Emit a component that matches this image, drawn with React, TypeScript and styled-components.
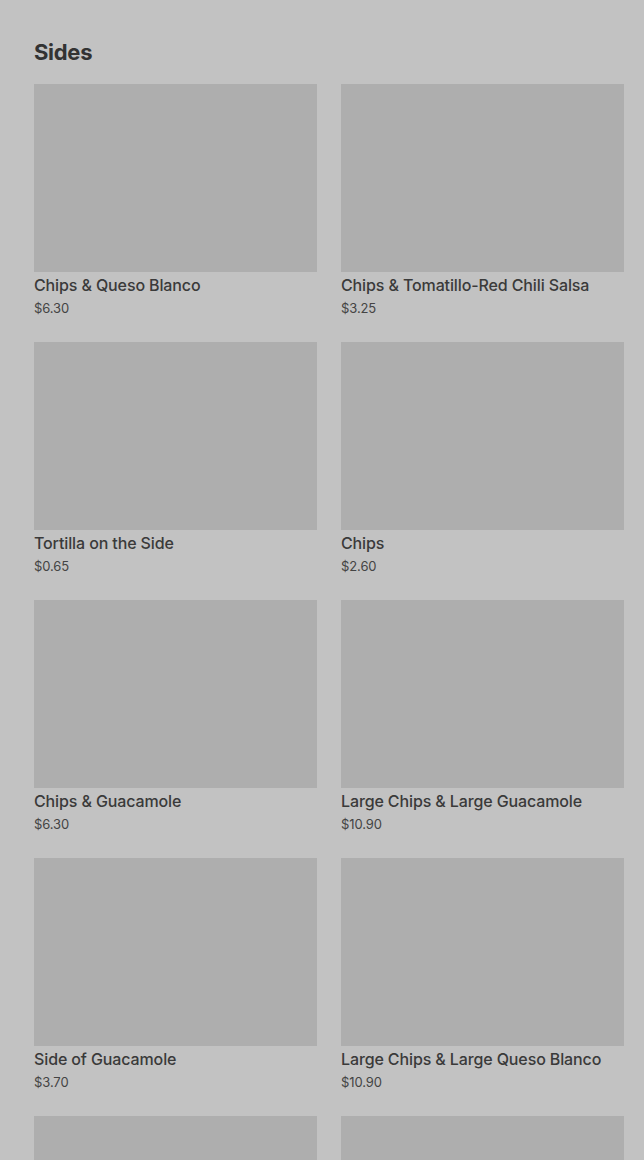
import styled, { createGlobalStyle } from "styled-components";

const GlobalStyle = createGlobalStyle`
  html, body {
    margin: 0;
    padding: 0;
    background: #c2c2c2;
  }
  body {
    font-family: Inter, "Noto Sans", Arial, sans-serif;
    color: #333333;
  }
`;

interface Item {
  name?: string;
  price?: string;
}

// last row is only partly in view, so just the thumbnails
const items: Item[] = [
  { name: "Chips & Queso Blanco", price: "$6.30" },
  { name: "Chips & Tomatillo-Red Chili Salsa", price: "$3.25" },
  { name: "Tortilla on the Side", price: "$0.65" },
  { name: "Chips", price: "$2.60" },
  { name: "Chips & Guacamole", price: "$6.30" },
  { name: "Large Chips & Large Guacamole", price: "$10.90" },
  { name: "Side of Guacamole", price: "$3.70" },
  { name: "Large Chips & Large Queso Blanco", price: "$10.90" },
  {},
  {},
];

const Page = styled.div`
  height: 1160px;
  overflow: hidden;
  padding: 38px 20px 0 34px;
  box-sizing: border-box;
`;

const Heading = styled.h2`
  margin: 0 0 18px;
  font-size: 22px;
  line-height: 28px;
  font-weight: 700;
  letter-spacing: -0.3px;
  color: #333333;
`;

const Grid = styled.div`
  display: grid;
  grid-template-columns: 283px 283px;
  column-gap: 24px;
  row-gap: 24px;
`;

const Card = styled.div`
  display: flex;
  flex-direction: column;
  height: 234px;
`;

const Thumb = styled.div`
  height: 188px;
  background: #aeaeae;
`;

const Name = styled.div`
  margin-top: 3px;
  font-size: 16px;
  line-height: 20px;
  font-weight: 500;
  letter-spacing: -0.12px;
  color: #3a3a3a;
  white-space: nowrap;
`;

const Price = styled.div`
  margin-top: 4px;
  font-size: 13px;
  line-height: 18px;
  font-weight: 400;
  letter-spacing: -0.1px;
  color: #444444;
`;

export default function App() {
  return (
    <>
      <GlobalStyle />
      <Page>
        <Heading>Sides</Heading>
        <Grid>
          {items.map((it, i) => (
            <Card key={i}>
              <Thumb />
              {it.name && <Name>{it.name}</Name>}
              {it.price && <Price>{it.price}</Price>}
            </Card>
          ))}
        </Grid>
      </Page>
    </>
  );
}
